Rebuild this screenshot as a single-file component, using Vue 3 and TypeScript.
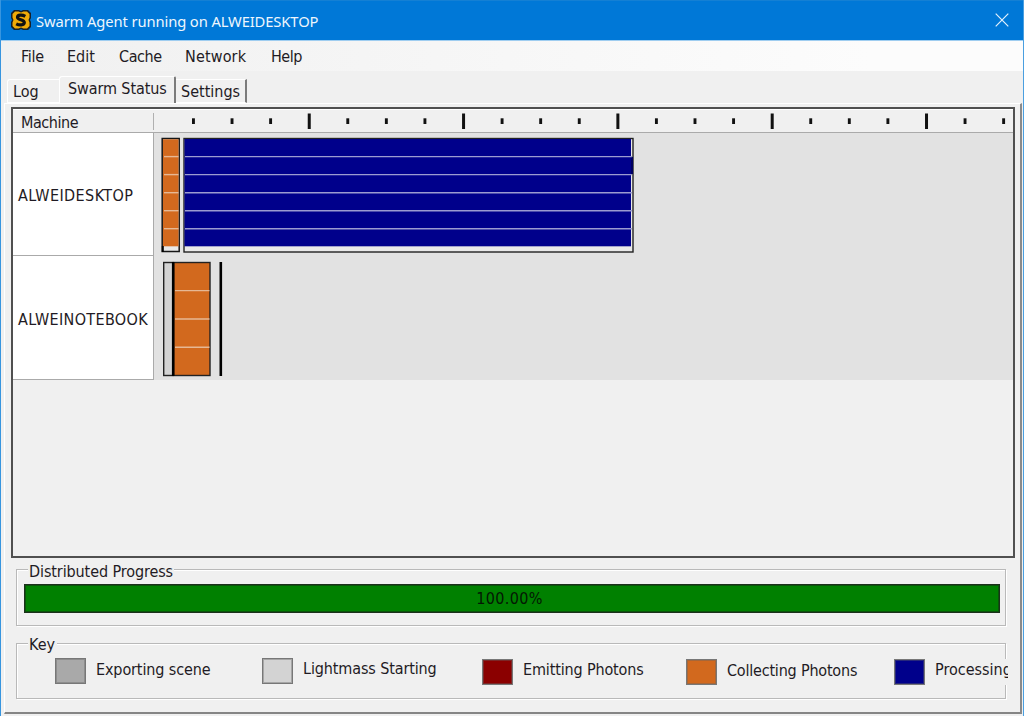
<script setup lang="ts">
interface MenuItem { label: string; cls: string }
interface KeyItem { label: string; cls: string }

const menu: MenuItem[] = [
  { label: 'File', cls: 'm-file' },
  { label: 'Edit', cls: 'm-edit' },
  { label: 'Cache', cls: 'm-cache' },
  { label: 'Network', cls: 'm-network' },
  { label: 'Help', cls: 'm-help' },
]

const keys: KeyItem[] = [
  { label: 'Exporting scene', cls: 'k-export' },
  { label: 'Lightmass Starting', cls: 'k-light' },
  { label: 'Emitting Photons', cls: 'k-emit' },
  { label: 'Collecting Photons', cls: 'k-collect' },
  { label: 'Processing', cls: 'k-process' },
]

// Ruler marks: every fourth one is a major tick
const ticks = Array.from({ length: 22 }, (_, i) => ({
  x: 39.5 + i * 38.58 - 1.5,
  major: i % 4 === 3,
}))

const desktopLines = [23.6, 41.6, 59.7, 77.7, 95.7]
const notebookLines = [157.6, 186, 214.3]
</script>

<template>
  <div class="window">
    <header class="titlebar">
      <svg class="app-icon" width="22" height="22" viewBox="0 0 22 22">
        <path d="M4 1H9L11 2L13 1H18L21 4V9L20 11L21 13V18L18 21H13L11 20L9 21H4L1 18V13L2 11L1 9V4Z" fill="#17202a" />
        <path d="M5 2.500H8.500L11 3.500L13.500 2.500H17L19.500 5V8.500L18.500 11L19.500 13.500V17L17 19.500H13.500L11 18.500L8.500 19.500H5L2.500 17V13.500L3.500 11L2.500 8.500V5Z" fill="#f0ab08" />
        <path d="M15.300 7.300C12.500 5.700 7.500 5.500 7.500 8.300C7.500 11.300 14.300 10.300 14.300 13.600C14.300 16.500 9 16.300 6.200 14.800" fill="none" stroke="#111" stroke-width="3.200" />
      </svg>
      <span class="title">Swarm Agent running on ALWEIDESKTOP</span>
      <svg class="close" width="14" height="14" viewBox="0 0 14 14">
        <path d="M.7.7L13.300 13.300M13.300.7L.7 13.300" stroke="#e4f1fc" stroke-width="1.200" />
      </svg>
    </header>

    <nav class="menubar">
      <span v-for="m in menu" :key="m.label" :class="m.cls">{{ m.label }}</span>
    </nav>

    <div class="tabs">
      <div class="tab log"><span>Log</span></div>
      <div class="tab active"><span>Swarm Status</span></div>
      <div class="tab settings"><span>Settings</span></div>
    </div>

    <main class="page">
      <section class="grid">
        <div class="machines">
          <div class="head"><span>Machine</span></div>
          <div class="machine first"><span>ALWEIDESKTOP</span></div>
          <div class="machine second"><span>ALWEINOTEBOOK</span></div>
        </div>
        <div class="timeline">
          <div class="ruler">
            <svg width="859" height="22" viewBox="0 1 859 22">
              <rect v-for="t in ticks" :key="t.x" :x="t.x" :y="t.major ? 4.500 : 9.300" :width="t.major ? 3 : 2.900" :height="t.major ? 15.500 : 5.700" fill="#111" />
            </svg>
          </div>
          <svg class="bars" width="859" height="247" viewBox="0 0 859 247">
            <g>
              <rect x="8.200" y="5.500" width="17" height="113" fill="#e9e9e9" stroke="#151515" stroke-width="1.500" />
              <rect x="9" y="6.300" width="15.500" height="107" fill="#d2691e" />
              <path d="M8.800 113V119" stroke="#000" stroke-width="2" />
              <path v-for="y in desktopLines" :key="y" :d="`M10 ${y}H24.500`" stroke="#e6b894" stroke-width="1.400" />
            </g>
            <g>
              <rect x="30" y="5.500" width="449" height="113.500" fill="#e9e9e9" stroke="#222" stroke-width="1.400" />
              <rect x="30.500" y="6" width="446.500" height="107.300" fill="#00008b" />
              <path d="M478 24V41" stroke="#000060" stroke-width="2" />
              <path v-for="y in desktopLines" :key="y" :d="`M31 ${y}H478`" stroke="#9c9cd0" stroke-width="1.400" />
            </g>
            <g>
              <rect x="9.700" y="129.500" width="9" height="113" fill="#d3d3d3" stroke="#222" stroke-width="1.400" />
              <rect x="19.500" y="129.500" width="36.500" height="113" fill="#d2691e" stroke="#222" stroke-width="1.400" />
              <path d="M19.200 129V243" stroke="#000" stroke-width="2.600" />
              <path v-for="y in notebookLines" :key="y" :d="`M21 ${y}H55.500`" stroke="#e6b894" stroke-width="1.400" />
              <path d="M66.800 129V243" stroke="#000" stroke-width="2.600" />
            </g>
          </svg>
        </div>
      </section>

      <section class="group progress">
        <span class="legend l-progress"><span>Distributed Progress</span></span>
        <div class="bar"><span>100.00%</span></div>
      </section>

      <section class="group key">
        <span class="legend l-key"><span>Key</span></span>
        <div class="keys">
          <div v-for="k in keys" :key="k.label" class="entry" :class="k.cls">
            <i></i><span>{{ k.label }}</span>
          </div>
        </div>
      </section>
    </main>
  </div>
</template>

<style>
body { margin: 0; overflow: hidden; }
</style>

<style scoped>
* { box-sizing: border-box; }
.window {
  width: 1024px; height: 716px; overflow: hidden;
  display: flex; flex-direction: column;
  background: #f0f0f0; color: #1f1b24;
  border-left: 1px solid #3795df; border-right: 1px solid #4a9fe0;
  font: 16px/20px "DejaVu Sans Condensed", "DejaVu Sans", sans-serif;
  white-space: nowrap;
}
.titlebar {
  height: 41px; margin: 0 -1px; padding: 0 15px 0 10px; flex: none;
  display: flex; align-items: center;
  background: #0078d7; border-top: 1px solid #1480d4; border-bottom: 1px solid #9fcdf0;
}
.app-icon { flex: none; margin-top: -2px; }
.title { margin-left: 4px; margin-top: 0; color: #eef6fd; font: 14.75px/22px "Noto Sans", sans-serif; letter-spacing: -0.11px; }
.close { margin-left: auto; margin-top: -1px; }

.menubar {
  height: 30px; flex: none; display: flex; padding: 6px 0 0 20px;
  background: linear-gradient(90deg, #f0f0f0, #fcfcfc 85%);
}
.menubar span { flex: none; }
.m-file { width: 46px; letter-spacing: -0.3px; }
.m-edit { width: 52px; }
.m-cache { width: 66px; letter-spacing: -0.4px; }
.m-network { width: 85px; letter-spacing: 0.15px; }
.m-help { margin-left: 1px; letter-spacing: -0.5px; }

.tabs { height: 32px; flex: none; display: flex; align-items: flex-end; padding-left: 6px; }
.log { width: 52px; height: 24px; padding: 2px 0 0 5px; border-left: 1px solid #fff; border-top: 1px solid #fff; border-bottom: 1px solid #fff; border-radius: 3px 0 0 0; }
.active { width: 117px; height: 27px; padding: 2px 0 0 8px; border-left: 1px solid #fff; border-top: 1px solid #fff; border-right: 2px solid #7b7b7b; border-radius: 3px 2px 0 0; letter-spacing: -0.1px; }
.settings { width: 71px; height: 24px; padding: 2px 0 0 5px; border-top: 1px solid #fff; border-right: 2px solid #7b7b7b; border-bottom: 1px solid #fff; }

.page {
  height: 611px; margin: 0 1px 0 3px; padding: 3px 6px 0 6px; flex: none;
  border: 1px solid #fff; border-right: 2px solid #8b8b8b; border-bottom: 2px solid #858585;
  display: flex; flex-direction: column;
}
.grid { width: 1004px; height: 451px; flex: none; border: 2px solid #505050; display: flex; }
.machines { width: 141px; flex: none; }
.head { height: 24px; border-bottom: 1px solid #aaa; border-top: 1px solid #fff; padding: 3px 0 0 8px; background: linear-gradient(#b0b0b0, #b0b0b0) 140px 3px / 1px 17px no-repeat; letter-spacing: -0.45px; }
.machine { width: 141px; background: #fff; border-right: 1px solid #aaa; border-bottom: 1px solid #aaa; padding-left: 5px; display: flex; align-items: center; }
.first { height: 123px; padding-top: 3px; letter-spacing: 0.42px; }
.second { height: 124px; padding-top: 4px; letter-spacing: 0.33px; }
.timeline { width: 859px; flex: none; }
.timeline svg { display: block; }
.ruler { height: 24px; border-top: 1px solid #fff; border-bottom: 1px solid #aaa; }
.bars { background: #e2e2e2; }

.group { width: 990px; height: 57px; margin-left: 5px; flex: none; border: 1px solid #b9b9b9; box-shadow: 1px 1px 0 #fff, inset 1px 1px 0 #fff; position: relative; }
.progress { margin-top: 11px; padding: 14px 0 0 7px; }
.key { height: 56px; margin-top: 17px; }
.legend { position: absolute; top: -8px; left: 11px; height: 20px; padding-left: 1px; background: #f0f0f0; }
.l-progress { width: 146px; letter-spacing: -0.1px; }
.l-key { top: -9px; width: 29px; }
.bar { width: 976px; height: 29px; background: #008000; border: 1px solid #1c301c; outline: 1px solid rgba(20, 40, 20, 0.5); outline-offset: -2px; padding-top: 4px; text-align: center; color: #041804; letter-spacing: 0.35px; }
.bar span { margin-right: 5px; }
.keys { width: 992px; height: 40px; margin-top: 14px; display: flex; }
.entry { flex: none; display: flex; }
.entry i { width: 31px; height: 26px; border: 1px solid #777; box-shadow: inset 0 0 0 1px rgba(100, 100, 100, 0.4); margin-right: 10px; flex: none; }
.k-export { width: 207px; margin-left: 38px; letter-spacing: -0.12px; }
.k-export i { background: #a9a9a9; }
.k-export span { margin-top: 2px; }
.k-light { width: 220px; letter-spacing: -0.12px; }
.k-light i { background: #d3d3d3; }
.k-light span { margin-top: 1px; }
.k-emit { width: 204px; margin-top: 1px; letter-spacing: -0.15px; }
.k-emit i { background: #8b0000; }
.k-emit span { margin-top: 1px; }
.k-collect { width: 208px; margin-top: 1px; letter-spacing: -0.2px; }
.k-collect i { background: #d2691e; }
.k-collect span { margin-top: 2px; }
.k-process { width: 114px; height: 26px; margin-top: 1px; overflow: hidden; background: #f0f0f0; }
.k-process i { background: #00008b; }
.k-process span { margin-top: 1px; }
</style>
